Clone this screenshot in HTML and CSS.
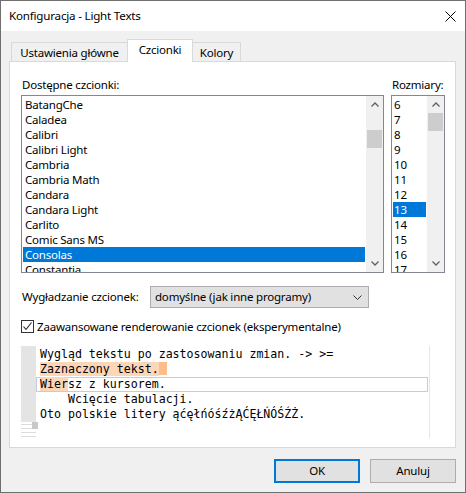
FILE: index.html
```html
<!DOCTYPE html>
<html lang="pl">
<head>
<meta charset="utf-8">
<title>Konfiguracja - Light Texts</title>
<link rel="stylesheet" href="styles.css">
</head>
<body>
<div class="window">
  <div class="titlebar">
    <span class="title">Konfiguracja - Light Texts</span>
    <svg class="close" width="11" height="11" viewBox="0 0 11 11"><path d="M0.5 0.5 L10.5 10.5 M10.5 0.5 L0.5 10.5" stroke="#000" stroke-width="1" fill="none"/></svg>
  </div>
  <div class="body">
    <div class="tabs">
      <div class="tab tab-main">Ustawienia główne</div>
      <div class="tab tab-active">Czcionki</div>
      <div class="tab tab-colors">Kolory</div>
    </div>
    <div class="panel">
      <div class="fonts-row">
        <div class="col col-fonts">
          <div class="label">Dostępne czcionki:</div>
          <div class="listbox">
            <div class="items">
              <div class="item">BatangChe</div>
              <div class="item">Caladea</div>
              <div class="item">Calibri</div>
              <div class="item">Calibri Light</div>
              <div class="item">Cambria</div>
              <div class="item">Cambria Math</div>
              <div class="item">Candara</div>
              <div class="item">Candara Light</div>
              <div class="item">Carlito</div>
              <div class="item">Comic Sans MS</div>
              <div class="item selected">Consolas</div>
              <div class="item">Constantia</div>
            </div>
            <div class="vscroll">
              <div class="arrow"><svg width="8" height="5" viewBox="0 0 8 5"><path d="M0.5 4.5 L4 1 L7.5 4.5" stroke="#606060" stroke-width="1.3" fill="none"/></svg></div>
              <div class="track"><div class="thumb thumb-fonts"></div></div>
              <div class="arrow"><svg width="8" height="5" viewBox="0 0 8 5"><path d="M0.5 0.5 L4 4 L7.5 0.5" stroke="#606060" stroke-width="1.3" fill="none"/></svg></div>
            </div>
          </div>
        </div>
        <div class="col col-sizes">
          <div class="label">Rozmiary:</div>
          <div class="listbox">
            <div class="items">
              <div class="item">6</div>
              <div class="item">7</div>
              <div class="item">8</div>
              <div class="item">9</div>
              <div class="item">10</div>
              <div class="item">11</div>
              <div class="item">12</div>
              <div class="item selected">13</div>
              <div class="item">14</div>
              <div class="item">15</div>
              <div class="item">16</div>
              <div class="item">17</div>
            </div>
            <div class="vscroll">
              <div class="arrow"><svg width="8" height="5" viewBox="0 0 8 5"><path d="M0.5 4.5 L4 1 L7.5 4.5" stroke="#606060" stroke-width="1.3" fill="none"/></svg></div>
              <div class="track"><div class="thumb thumb-sizes"></div></div>
              <div class="arrow"><svg width="8" height="5" viewBox="0 0 8 5"><path d="M0.5 0.5 L4 4 L7.5 0.5" stroke="#606060" stroke-width="1.3" fill="none"/></svg></div>
            </div>
          </div>
        </div>
      </div>
      <div class="smooth-row">
        <span class="smooth-label">Wygładzanie czcionek:</span>
        <div class="combo">
          <span>domyślne (jak inne programy)</span>
          <svg width="9" height="5" viewBox="0 0 9 5"><path d="M0.5 0.5 L4.5 4.5 L8.5 0.5" stroke="#333" stroke-width="1" fill="none"/></svg>
        </div>
      </div>
      <div class="check-row">
        <span class="checkbox"><svg width="11" height="11" viewBox="0 0 11 11"><path d="M1.5 5.5 L4 8.5 L9.5 1.5" stroke="#222" stroke-width="1.1" fill="none"/></svg></span>
        <span>Zaawansowane renderowanie czcionek (eksperymentalne)</span>
      </div>
      <div class="editor">
        <div class="gutter">
          <div class="gutter-fill"></div>
          <div class="gutter-marks">
            <span class="mark mark-block"></span>
            <span class="mark"></span>
            <span class="mark"></span>
            <span class="mark"></span>
            <span class="mark"></span>
          </div>
        </div>
        <div class="lines">
          <div class="line">Wygląd tekstu po zastosowaniu zmian. -&gt; &gt;=</div>
          <div class="line"><span class="sel">Zaznaczony tekst.</span><span class="sel-eol"> </span></div>
          <div class="line current"><span class="sel">Wier</span>sz z kursorem.</div>
          <div class="line">    Wcięcie tabulacji.</div>
          <div class="line">Oto polskie litery ąćęłńóśźżĄĆĘŁŃÓŚŹŻ.</div>
        </div>
      </div>
    </div>
    <div class="buttons">
      <div class="btn btn-default">OK</div>
      <div class="btn">Anuluj</div>
    </div>
  </div>
</div>
</body>
</html>
```
FILE: styles.css
```css
* { box-sizing: border-box; }
html, body { margin: 0; padding: 0; }
body {
  width: 466px;
  height: 493px;
  font-family: "Noto Sans", "Open Sans", sans-serif;
  font-size: 11.5px;
  letter-spacing: -0.2px;
  color: #000;
  background: #f0f0f0;
}
.window {
  width: 466px;
  height: 493px;
  border: 1px solid #6f6f6f;
  display: flex;
  flex-direction: column;
  background: #f0f0f0;
}
.titlebar {
  height: 30px;
  background: #fff;
  display: flex;
  align-items: center;
  padding-left: 8px;
  padding-right: 9px;
}
.title { flex: 1; line-height: 16px; padding-bottom: 1px; font-size: 11.6px; }
.close { display: block; margin-top: 1px; }
.body {
  flex: 1;
  padding: 8px 9px 9px 8px;
  display: flex;
  flex-direction: column;
}
.tabs {
  height: 22px;
  display: flex;
  align-items: flex-end;
  padding-left: 2px;
}
.tab {
  height: 19px;
  border: 1px solid #d9d9d9;
  border-bottom: none;
  background: #f0f0f0;
  display: flex;
  align-items: center;
  justify-content: center;
  line-height: 16px;
  padding-top: 1px;
}
.tab-main { width: 117px; }
.tab-active {
  width: 66px;
  height: 23px;
  margin-bottom: -1px;
  margin-left: -1px;
  background: #fff;
  position: relative;
  z-index: 2;
  padding-top: 0;
  padding-bottom: 3px;
}
.tab-colors { width: 49px; margin-left: -1px; }
.panel {
  height: 387px;
  background: #fff;
  border: 1px solid #d9d9d9;
  padding: 15px 10px 0 11px;
  display: flex;
  flex-direction: column;
}
.fonts-row {
  display: flex;
  gap: 7px;
}
.col { display: flex; flex-direction: column; }
.col-fonts { width: 363px; }
.col-sizes { width: 54px; }
.label {
  height: 16px;
  line-height: 16px;
  padding-left: 1px;
  margin-bottom: 2px;
}
.listbox {
  height: 178px;
  border: 1px solid #828790;
  display: flex;
  overflow: hidden;
}
.items {
  flex: 1;
  padding: 1px 1px 0 1px;
  overflow: hidden;
}
.item {
  height: 15px;
  line-height: 15px;
  padding-left: 2px;
  white-space: nowrap;
  overflow: hidden;
}
.item.selected { background: #0078d7; color: #fff; }
.col-sizes .item { padding-left: 1px; }
.vscroll {
  width: 17px;
  background: #f0f0f0;
  display: flex;
  flex-direction: column;
}
.arrow {
  height: 17px;
  display: flex;
  align-items: center;
  justify-content: center;
}
.arrow svg { display: block; }
.track { flex: 1; }
.thumb { background: #cdcdcd; height: 18px; margin: 0 1px 0 1px; }
.thumb-fonts { margin-top: 17px; }
.thumb-sizes { margin-top: 0; }
.smooth-row {
  margin-top: 13px;
  display: flex;
  align-items: center;
  height: 22px;
}
.smooth-label { width: 129px; padding-left: 1px; line-height: 16px; }
.combo {
  width: 219px;
  height: 22px;
  border: 1px solid #adadad;
  background: #e1e1e1;
  display: flex;
  align-items: center;
  justify-content: space-between;
  padding: 0 6px 1px 4px;
  line-height: 16px;
}
.combo svg { display: block; margin-top: 1px; }
.check-row {
  margin-top: 12px;
  height: 13px;
  display: flex;
  align-items: center;
  gap: 3px;
  line-height: 16px;
}
.checkbox {
  width: 13px;
  height: 13px;
  border: 1px solid #333;
  background: #fff;
  display: flex;
  align-items: center;
  justify-content: center;
}
.checkbox svg { display: block; }
.editor {
  margin-top: 13px;
  width: 409px;
  height: 92px;
  border-right: 1px solid #e6e6e6;
  display: flex;
}
.gutter {
  width: 15px;
  display: flex;
  flex-direction: column;
}
.gutter-fill { height: 76px; background: #e4e4e4; }
.gutter-marks {
  position: relative;
  display: flex;
  flex-direction: column;
  gap: 3px;
  padding-top: 2px;
}
.mark { display: block; height: 1px; background: #dcdcdc; width: 15px; }
.mark-block {
  position: absolute;
  left: 11px;
  top: 0;
  width: 6px;
  height: 7px;
  background: #c8c8c8;
}
.lines {
  width: 392px;
  padding-top: 1px;
  font-family: "DejaVu Sans Mono", "Liberation Mono", monospace;
  font-size: 11.6px;
  letter-spacing: 0;
}
.line {
  height: 15px;
  line-height: 15px;
  padding-left: 4px;
  white-space: pre;
}
.line.current { box-shadow: inset 0 0 0 1px #cbc7e3; }
.sel { background: #fdd6b8; }
.sel-eol { background: #fbbd8c; display: inline-block; width: 8px; height: 13px; vertical-align: top; }
.buttons {
  margin-top: 11px;
  display: flex;
  justify-content: flex-end;
  gap: 10px;
}
.btn {
  width: 86px;
  height: 24px;
  border: 1px solid #adadad;
  background: #e1e1e1;
  display: flex;
  align-items: center;
  justify-content: center;
  line-height: 16px;
}
.btn-default { border: 2px solid #0078d7; }
```
